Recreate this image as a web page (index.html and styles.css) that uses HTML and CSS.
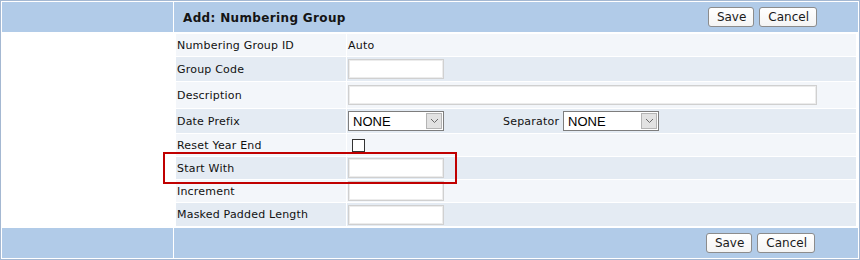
FILE: index.html
```html
<!DOCTYPE html>
<html>
<head>
<meta charset="utf-8">
<title>Add: Numbering Group</title>
<link rel="stylesheet" href="styles.css">
</head>
<body>
<div class="frame">
  <div class="bar"></div>
  <div class="bar bar-main head">
    <span class="title">Add: Numbering Group</span>
    <span class="actions"><button class="btn">Save</button><button class="btn">Cancel</button></span>
  </div>
  <div class="side"></div>
  <div class="form">
    <div class="row light h22"><div class="lbl">Numbering Group ID</div><div class="val">Auto</div></div>
    <div class="row dark h24"><div class="lbl">Group Code</div><div class="val"><span class="input short"></span></div></div>
    <div class="row light h26"><div class="lbl">Description</div><div class="val"><span class="input long"></span></div></div>
    <div class="row dark h24"><div class="lbl">Date Prefix</div><div class="val">
      <span class="select"><span class="sel-text">NONE</span><span class="sel-btn"><svg width="9" height="6" viewBox="0 0 9 6"><path d="M1 1 L4.5 4.5 L8 1" fill="none" stroke="#6a6a6a" stroke-width="1"/></svg></span></span>
      <span class="sep-lbl">Separator</span>
      <span class="select"><span class="sel-text">NONE</span><span class="sel-btn"><svg width="9" height="6" viewBox="0 0 9 6"><path d="M1 1 L4.5 4.5 L8 1" fill="none" stroke="#6a6a6a" stroke-width="1"/></svg></span></span>
    </div></div>
    <div class="row light h22"><div class="lbl">Reset Year End</div><div class="val"><span class="check"></span></div></div>
    <div class="row dark h22"><div class="lbl">Start With</div><div class="val"><span class="input short"></span></div></div>
    <div class="row light h22"><div class="lbl">Increment</div><div class="val"><span class="input short"></span></div></div>
    <div class="row dark h23"><div class="lbl">Masked Padded Length</div><div class="val"><span class="input short"></span></div></div>
  </div>
  <div class="bar"></div>
  <div class="bar bar-main foot">
    <span class="actions"><button class="btn">Save</button><button class="btn">Cancel</button></span>
  </div>
  <div class="highlight"></div>
</div>
</body>
</html>
```
FILE: styles.css
```css
html, body {
  margin: 0;
  padding: 0;
  background: #ffffff;
}
body {
  font-family: "DejaVu Sans", Verdana, sans-serif;
  font-size: 11px;
  color: #111;
}
.frame {
  position: relative;
  box-sizing: border-box;
  width: 860px;
  height: 260px;
  border: 1px solid #a4b8d2;
  padding: 1px;
  background: #fff;
  display: grid;
  grid-template-columns: 171px 1fr;
  grid-template-rows: 30px 1fr 30px;
  gap: 1px;
}
.bar {
  background: #b1cbe8;
}
.bar-main {
  display: flex;
  align-items: center;
}
.head {
  padding: 0 41px 0 9px;
}
.foot {
  padding: 0 43px 0 9px;
  justify-content: flex-end;
}
.title {
  font-size: 12px;
  font-weight: bold;
  letter-spacing: 0.35px;
  color: #141414;
  flex: 1;
  padding-top: 1px;
}
.actions {
  display: flex;
  gap: 5px;
}
.btn {
  font-family: "DejaVu Sans", Verdana, sans-serif;
  font-size: 12px;
  color: #1a1a1a;
  height: 20px;
  padding: 0 7px 0 8px;
  margin: 0;
  border: 1px solid #8c8c8c;
  border-radius: 3px;
  background: linear-gradient(#ffffff, #f4f4f4);
  line-height: 18px;
}
.side {
  background: #fff;
}
.form {
  padding: 1px 2px;
  display: flex;
  flex-direction: column;
  gap: 1px;
}
.row {
  display: grid;
  grid-template-columns: 170px 1fr;
  gap: 1px;
}
.row.light > div { background: #f3f6fa; }
.row.dark > div { background: #e4ebf3; }
.h22 { height: 22px; }
.h23 { height: 23px; }
.h24 { height: 24px; }
.h26 { height: 26px; }
.lbl {
  display: flex;
  align-items: center;
  padding-left: 1px;
  white-space: nowrap;
  letter-spacing: 0.2px;
}
.val {
  display: flex;
  align-items: center;
  padding-left: 1px;
  letter-spacing: 0.2px;
}
.input {
  box-sizing: border-box;
  display: block;
  height: 20px;
  background: #fff;
  border: 1px solid #d0d0d0;
  box-shadow: inset 0 0 0 1px #ececec;
}
.input.short { width: 96px; }
.input.long { width: 469px; }
.select {
  box-sizing: border-box;
  display: flex;
  align-items: stretch;
  width: 96px;
  height: 20px;
  border: 1px solid #7d7d7d;
  background: #fff;
  padding: 1px;
  font-family: "Liberation Sans", Arial, sans-serif;
  font-size: 13px;
  letter-spacing: 0;
  color: #000;
}
.sel-text {
  flex: 1;
  display: flex;
  align-items: center;
  padding-left: 3px;
}
.sel-btn {
  box-sizing: border-box;
  width: 16px;
  background: #e2e2e2;
  border: 1px solid #b4b4b4;
  display: flex;
  align-items: center;
  justify-content: center;
}
.sep-lbl {
  margin-left: 59px;
  margin-right: 4px;
}
.check {
  box-sizing: border-box;
  display: block;
  width: 13px;
  height: 13px;
  margin-left: 4px;
  border: 1px solid #333;
  background: #fff;
}
.highlight {
  position: absolute;
  left: 162px;
  top: 151px;
  width: 294px;
  height: 32px;
  box-sizing: border-box;
  border: 2px solid #c00000;
  pointer-events: none;
}
```
